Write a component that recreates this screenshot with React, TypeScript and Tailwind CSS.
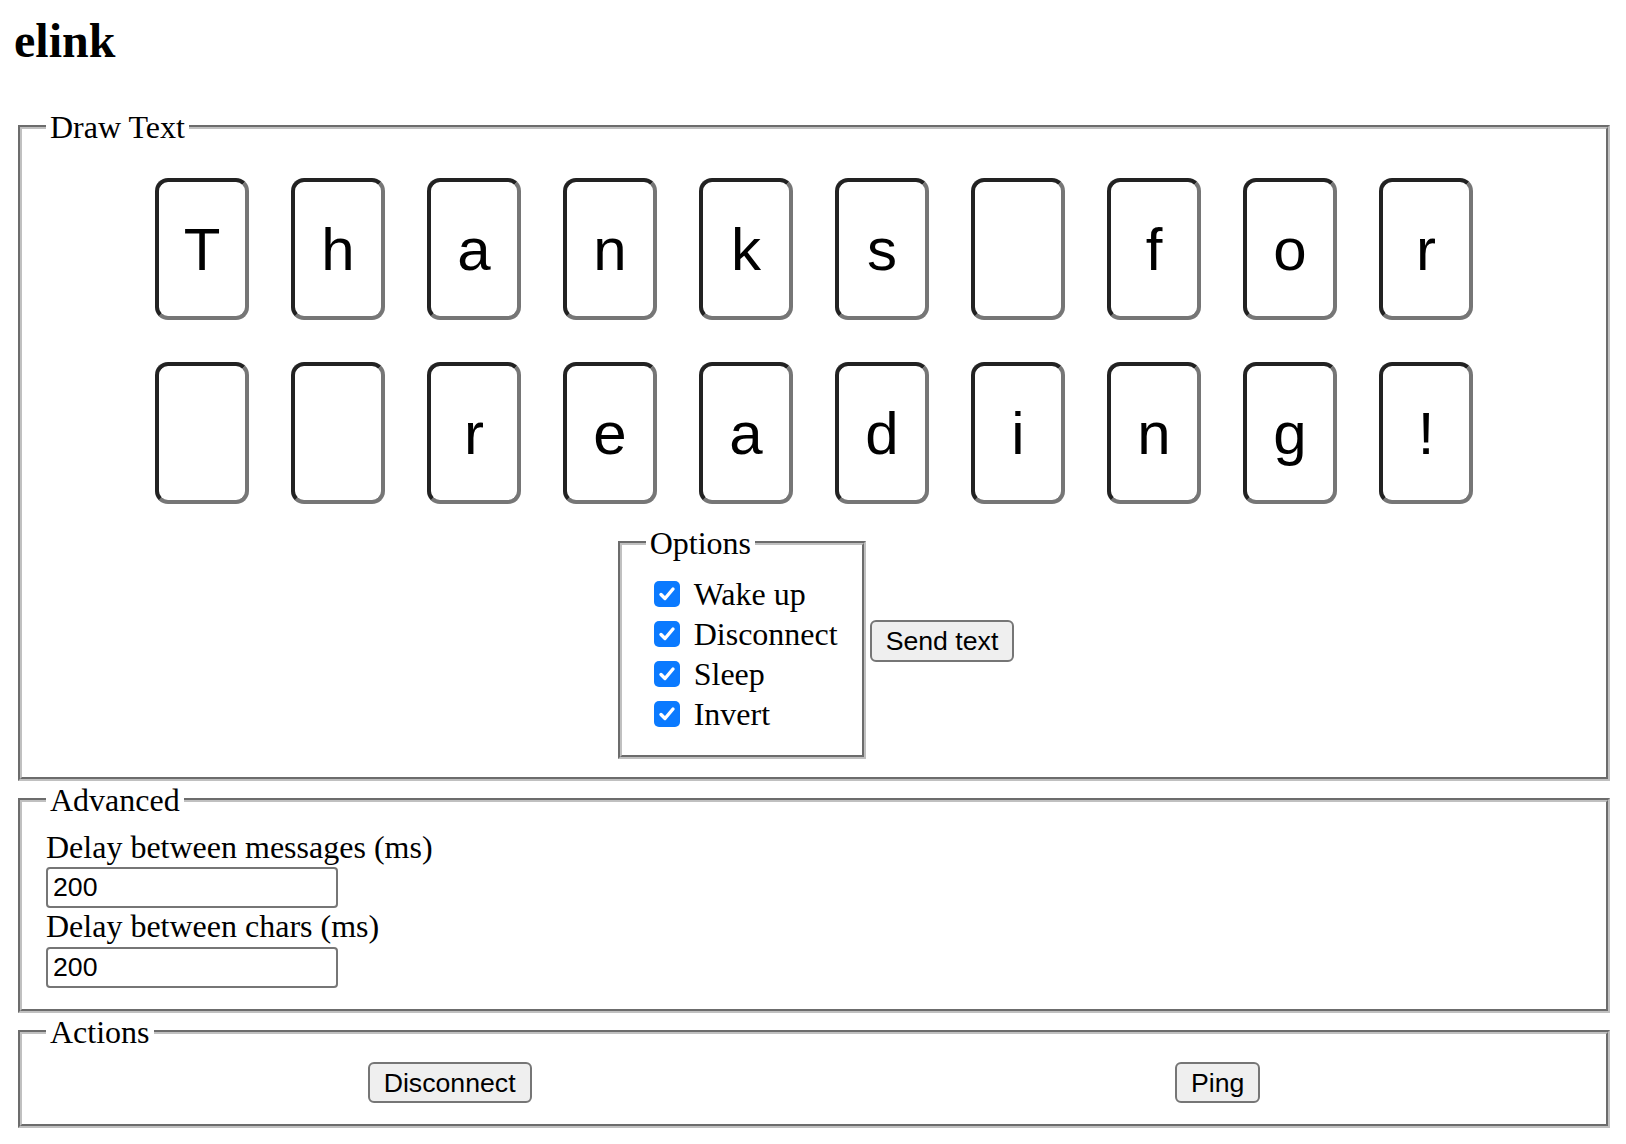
import React from "react";

const row1 = ["T", "h", "a", "n", "k", "s", " ", "f", "o", "r"];
const row2 = [" ", " ", "r", "e", "a", "d", "i", "n", "g", "!"];

function Key({ ch }: { ch: string }) {
  return (
    <div className="flex h-[142px] w-[94px] items-center justify-center rounded-[13px] border-[4px] border-t-[#222222] border-l-[#222222] border-b-[#767676] border-r-[#767676] bg-white font-['Liberation_Sans',Arial,sans-serif] text-[60px] leading-[69px] text-black">
      {ch.trim() ? ch : ""}
    </div>
  );
}

function Check({ label }: { label: string }) {
  return (
    <div className="flex h-[40px] items-center">
      <div className="ml-[8px] mr-[14px] flex h-[26px] w-[26px] items-center justify-center rounded-[5px] bg-[#0a7aff]">
        <svg width="20" height="20" viewBox="0 0 20 20" fill="none">
          <path d="M4 10.5 L8 14.5 L16 5" stroke="white" strokeWidth="3.4" strokeLinecap="round" strokeLinejoin="round" />
        </svg>
      </div>
      <span className="leading-[36px]">{label}</span>
    </div>
  );
}

const fs = "border-[4px] border-[#c0c0c0] [border-style:groove]";
const btn =
  "h-[41px] rounded-[6px] border-2 border-[#767676] bg-[#efefef] px-[14px] font-['Liberation_Sans',Arial,sans-serif] text-[26.67px] leading-[30px] text-black";
const inp =
  "block h-[41px] w-[292px] rounded-[4px] border-2 border-[#767676] px-[5px] font-['Liberation_Sans',Arial,sans-serif] text-[26.67px] text-black outline-none";

export default function App() {
  return (
    <div className="min-h-[1144px] bg-white pl-[14px] pr-[12px] pt-[14px] font-['Liberation_Serif','Times_New_Roman',serif] text-[32px] leading-[36px] text-black">
      <h1 className="text-[48px] font-bold leading-[53px]">elink</h1>

      <fieldset className={`mx-[4px] mt-[42px] px-[24px] pt-[33px] pb-[18px] ${fs}`}>
        <legend className="px-[4px] leading-[36px]">Draw Text</legend>
        <div className="flex flex-col items-center gap-[42px]">
          <div className="flex gap-[42px]">
            {row1.map((c, i) => (
              <Key key={i} ch={c} />
            ))}
          </div>
          <div className="flex gap-[42px]">
            {row2.map((c, i) => (
              <Key key={i} ch={c} />
            ))}
          </div>
        </div>
        <div className="mt-[21px] flex items-center justify-center">
          <fieldset className={`ml-[4px] px-[24px] pt-[13px] pb-[21px] ${fs}`}>
            <legend className="px-[4px] leading-[36px]">Options</legend>
            <Check label="Wake up" />
            <Check label="Disconnect" />
            <Check label="Sleep" />
            <Check label="Invert" />
          </fieldset>
          <button className={`ml-[4px] -mt-[2px] h-[42px] ${btn}`}>Send text</button>
        </div>
      </fieldset>

      <fieldset className={`mx-[4px] mt-[1px] px-[24px] pt-[11px] pb-[21px] ${fs}`}>
        <legend className="px-[4px] leading-[36px]">Advanced</legend>
        <div className="leading-[36px]">Delay between messages (ms)</div>
        <input readOnly value="200" className={`mt-[2px] ${inp}`} />
        <div className="leading-[36px]">Delay between chars (ms)</div>
        <input readOnly value="200" className={`mt-[3px] ${inp}`} />
      </fieldset>

      <fieldset className={`mx-[4px] mt-[1px] px-[24px] pt-[12px] pb-[21px] ${fs}`}>
        <legend className="px-[4px] leading-[36px]">Actions</legend>
        <div className="flex justify-around">
          <button className={btn}>Disconnect</button>
          <button className={btn}>Ping</button>
        </div>
      </fieldset>
    </div>
  );
}
